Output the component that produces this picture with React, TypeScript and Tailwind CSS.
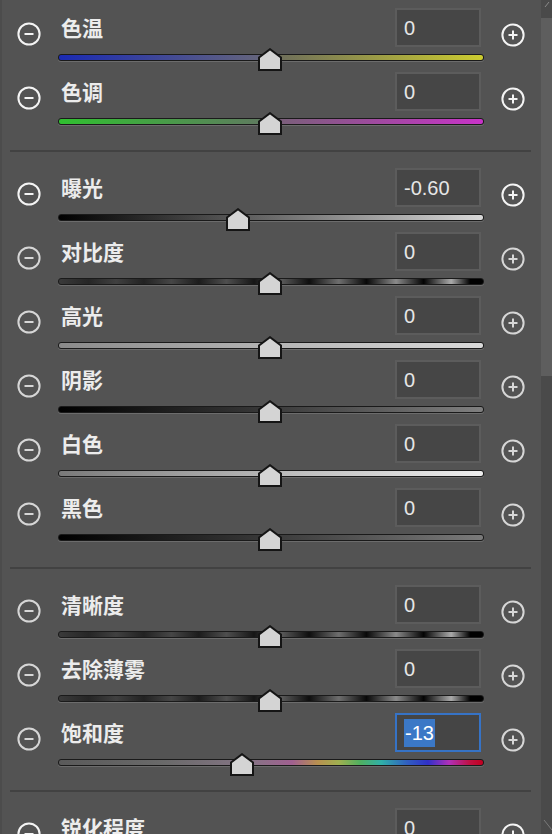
import React from "react";

type Row = {
  label: string;
  value: string;
  track: string;
  thumbLeft: number;
  selected?: boolean;
  bright?: boolean;
};

const CONTRAST =
  "bg-[linear-gradient(to_right,#3a3a3a_0%,#262626_7%,#404040_13.5%,#222222_20%,#464646_26.5%,#1c1c1c_33%,#4e4e4e_39.5%,#161616_46%,#5a5a5a_52.5%,#0e0e0e_59%,#6e6e6e_66%,#080808_72.5%,#8a8a8a_79.5%,#030303_86%,#aaaaaa_92.5%,#000000_97%,#000000_100%)]";

const sec1: Row[] = [
  {
    label: "色温",
    value: "0",
    track: "bg-[linear-gradient(to_right,#1a2ab4_0%,#65657c_48%,#6f6f5a_52%,#cccc30_100%)]",
    thumbLeft: 200,
    bright: true,
  },
  {
    label: "色调",
    value: "0",
    track: "bg-[linear-gradient(to_right,#30c030_0%,#5f7a5f_48%,#7a5f7a_52%,#c833c8_100%)]",
    thumbLeft: 200,
    bright: true,
  },
];

const sec2: Row[] = [
  {
    label: "曝光",
    value: "-0.60",
    track: "bg-[linear-gradient(to_right,#000000_0%,#6a6a6a_50%,#d8d8d8_100%)]",
    thumbLeft: 168,
    bright: true,
  },
  { label: "对比度", value: "0", track: CONTRAST, thumbLeft: 200 },
  {
    label: "高光",
    value: "0",
    track: "bg-[linear-gradient(to_right,#8a8a8a_0%,#b4b4b4_50%,#dadada_100%)]",
    thumbLeft: 200,
  },
  {
    label: "阴影",
    value: "0",
    track: "bg-[linear-gradient(to_right,#000000_0%,#3a3a3a_50%,#808080_100%)]",
    thumbLeft: 200,
  },
  {
    label: "白色",
    value: "0",
    track: "bg-[linear-gradient(to_right,#7a7a7a_0%,#b8b8b8_50%,#eeeeee_100%)]",
    thumbLeft: 200,
  },
  {
    label: "黑色",
    value: "0",
    track: "bg-[linear-gradient(to_right,#000000_0%,#3a3a3a_50%,#7a7a7a_100%)]",
    thumbLeft: 200,
  },
];

const sec3: Row[] = [
  { label: "清晰度", value: "0", track: CONTRAST, thumbLeft: 200 },
  { label: "去除薄雾", value: "0", track: CONTRAST, thumbLeft: 200 },
  {
    label: "饱和度",
    value: "-13",
    track:
      "bg-[linear-gradient(to_right,#5a5a5a_0%,#6a6a6a_25%,#857585_45%,#a06090_55%,#b89050_61%,#a0b050_66%,#50b060_71%,#30b0a8_76%,#3060c0_82%,#3030c8_87%,#b030b8_92%,#c01040_97%,#c00020_100%)]",
    thumbLeft: 172,
    selected: true,
  },
];

function MinusIcon({ bright }: { bright?: boolean }) {
  return (
    <svg width="24" height="24" viewBox="0 0 24 24" fill="none" className={bright ? "text-[#f4f4f4]" : "text-[#d6d6d6]"}>
      <circle cx="12" cy="12" r="10.6" stroke="currentColor" strokeWidth="2" />
      <line x1="7.5" y1="12" x2="16.5" y2="12" stroke="currentColor" strokeWidth="2" />
    </svg>
  );
}

function PlusIcon({ bright }: { bright?: boolean }) {
  return (
    <svg width="24" height="24" viewBox="0 0 24 24" fill="none" className={bright ? "text-[#f4f4f4]" : "text-[#d6d6d6]"}>
      <circle cx="12" cy="12" r="10.6" stroke="currentColor" strokeWidth="2" />
      <line x1="7.5" y1="12" x2="16.5" y2="12" stroke="currentColor" strokeWidth="2" />
      <line x1="12" y1="7.5" x2="12" y2="16.5" stroke="currentColor" strokeWidth="2" />
    </svg>
  );
}

function Thumb() {
  return (
    <svg width="24" height="23" viewBox="0 0 24 23">
      <polygon points="1,9.5 12,1.2 23,9.5 23,22 1,22" fill="#d4d4d4" stroke="#151515" strokeWidth="2" strokeLinejoin="miter" />
    </svg>
  );
}

function SliderRow({ row }: { row: Row }) {
  return (
    <div className="flex h-[64px] shrink-0">
      <div className="w-[58px] flex justify-center pt-[14px]">
        <MinusIcon bright={row.bright} />
      </div>
      <div className="w-[426px] flex flex-col">
        <div className="h-[39px] shrink-0 flex items-center justify-between">
          <span className="pl-[3px] text-[21px] leading-none font-semibold text-[#ececec] [font-family:'Noto_Sans_CJK_SC','Noto_Sans',sans-serif]">
            {row.label}
          </span>
          <div
            className={
              "mr-[3px] w-[86px] h-[39px] flex items-center pl-[7px] border-2 " +
              (row.selected ? "border-[#3673c6] bg-[#454545]" : "border-[#5c5c5c] bg-[#464646]")
            }
          >
            {row.selected ? (
              <span className="bg-[#3b78c6] text-white text-[20px] leading-[28px] h-[28px] px-[1px] [font-family:'Liberation_Sans',Arial,sans-serif]">
                {row.value}
              </span>
            ) : (
              <span className="text-[#e6e6e6] text-[20px] leading-none [font-family:'Liberation_Sans',Arial,sans-serif]">
                {row.value}
              </span>
            )}
          </div>
        </div>
        <div className="relative mt-[7px] h-[8px] shrink-0">
          <div
            className={
              "h-[7px] rounded-[3px] border border-[#1a1a1a] shadow-[0_1px_0_#6c6c6c] " + row.track
            }
          />
          <div className="absolute top-[-6px]" style={{ left: row.thumbLeft }}>
            <Thumb />
          </div>
        </div>
      </div>
      <div className="w-[57px] flex justify-center pt-[15px]">
        <PlusIcon bright={row.bright} />
      </div>
    </div>
  );
}

function Divider({ mt }: { mt: string }) {
  return <div className={"mx-[10px] h-[2px] bg-[#424242] mb-[16px] " + mt} />;
}

export default function App() {
  return (
    <div className="w-[552px] h-[834px] overflow-hidden bg-[#535353] flex items-start">
      <div className="w-[541px] h-[834px] shrink-0 shadow-[inset_2px_0_0_#4c4c4c]">
        <div className="pt-[8px]">
          {sec1.map((r) => (
            <SliderRow key={r.label} row={r} />
          ))}
        </div>
        <Divider mt="mt-[14px]" />
        <div>
          {sec2.map((r) => (
            <SliderRow key={r.label} row={r} />
          ))}
        </div>
        <Divider mt="mt-[15px]" />
        <div>
          {sec3.map((r) => (
            <SliderRow key={r.label} row={r} />
          ))}
        </div>
        <Divider mt="mt-[13px]" />
        <div>
          <SliderRow row={{ label: "锐化程度", value: "0", track: "bg-[linear-gradient(to_right,#3a3a3a,#8a8a8a)]", thumbLeft: 0, bright: true }} />
        </div>
      </div>
      <div className="w-[11px] h-[834px] shrink-0 flex flex-col bg-[#4a4a4a]">
        <div className="h-[18px] relative">
          <svg width="11" height="18" viewBox="0 0 11 18" className="absolute inset-0">
            <line x1="4" y1="7" x2="8" y2="2" stroke="#8a8a8a" strokeWidth="1" />
          </svg>
        </div>
        <div className="h-[358px] bg-[#5e5e5e]" />
        <div className="flex-1 relative">
          <svg width="11" height="20" viewBox="0 0 11 20" className="absolute bottom-0 left-0">
            <line x1="3" y1="6" x2="11" y2="16" stroke="#7a7a7a" strokeWidth="1" />
          </svg>
        </div>
      </div>
    </div>
  );
}
